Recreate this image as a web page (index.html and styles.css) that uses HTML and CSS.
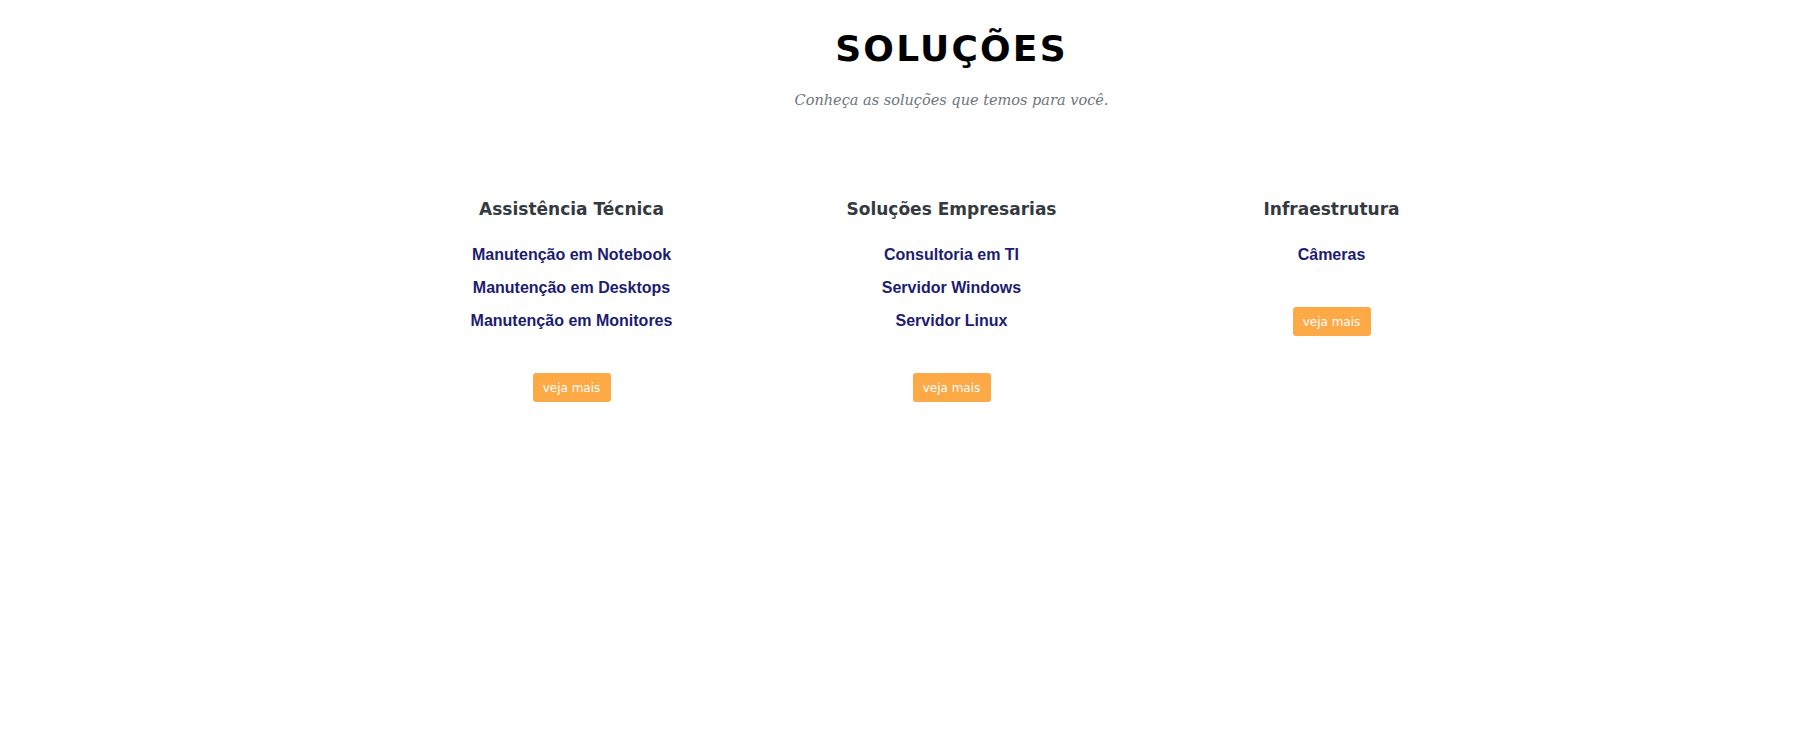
FILE: index.html
```html
<!DOCTYPE html>
<html lang="pt-BR">
<head>
<meta charset="utf-8">
<title>Soluções</title>
<link rel="stylesheet" href="styles.css">
</head>
<body>
<div class="page">
  <section class="solucoes">
    <header class="section-head">
      <h1 class="title">SOLUÇÕES</h1>
      <p class="subtitle">Conheça as soluções que temos para você.</p>
    </header>
    <div class="cols">
      <div class="col">
        <h3 class="col-title">Assistência Técnica</h3>
        <ul class="links">
          <li><a href="#">Manutenção em Notebook</a></li>
          <li><a href="#">Manutenção em Desktops</a></li>
          <li><a href="#">Manutenção em Monitores</a></li>
        </ul>
        <a class="btn" href="#">veja mais</a>
      </div>
      <div class="col">
        <h3 class="col-title">Soluções Empresarias</h3>
        <ul class="links">
          <li><a href="#">Consultoria em TI</a></li>
          <li><a href="#">Servidor Windows</a></li>
          <li><a href="#">Servidor Linux</a></li>
        </ul>
        <a class="btn" href="#">veja mais</a>
      </div>
      <div class="col">
        <h3 class="col-title">Infraestrutura</h3>
        <ul class="links">
          <li><a href="#">Câmeras</a></li>
        </ul>
        <a class="btn" href="#">veja mais</a>
      </div>
    </div>
  </section>
</div>
</body>
</html>
```
FILE: styles.css
```css
html, body {
  margin: 0;
  padding: 0;
  background: #fff;
  overflow: hidden;
}
body {
  font-family: "DejaVu Sans", sans-serif;
}
.page {
  width: 1903px;
}
.solucoes {
  width: 1140px;
  margin: 0 auto;
  padding-top: 28px;
}
.section-head {
  display: flex;
  flex-direction: column;
  align-items: center;
}
.title {
  margin: 0;
  font-family: "DejaVu Sans", sans-serif;
  font-weight: 700;
  font-size: 36px;
  line-height: 41px;
  letter-spacing: 2.2px;
  color: #000;
}
.subtitle {
  margin: 21px 0 0;
  font-family: "DejaVu Serif", serif;
  font-style: italic;
  font-size: 14.5px;
  line-height: 20px;
  color: #6c757d;
}
.cols {
  display: grid;
  grid-template-columns: repeat(3, 1fr);
  margin-top: 88px;
}
.col {
  display: flex;
  flex-direction: column;
  align-items: center;
  text-align: center;
}
.col-title {
  margin: 0;
  font-family: "DejaVu Sans", sans-serif;
  font-weight: 700;
  font-size: 17px;
  line-height: 22px;
  color: #343a40;
}
.links {
  list-style: none;
  margin: 18px 0 0;
  padding: 0;
}
.links li {
  line-height: 33px;
}
.links a {
  font-family: "Liberation Sans", Arial, sans-serif;
  font-weight: 700;
  font-size: 16px;
  color: #1c1c72;
  text-decoration: none;
}
.btn {
  margin-top: 36px;
  width: 78px;
  height: 29px;
  display: flex;
  align-items: center;
  justify-content: center;
  background: #fdaa46;
  border-radius: 3px;
  color: #fff;
  font-family: "DejaVu Sans", sans-serif;
  font-size: 12px;
  text-decoration: none;
}
```
